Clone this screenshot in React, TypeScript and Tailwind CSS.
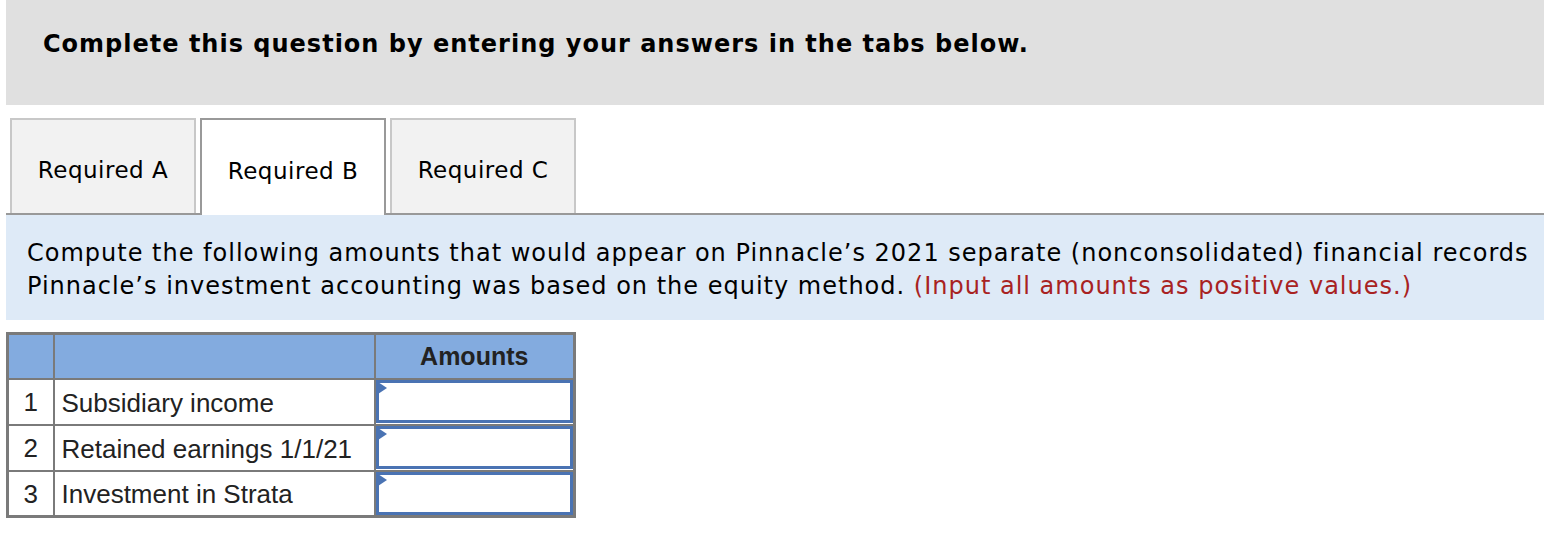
const rows = [
  { n: 1, label: "Subsidiary income" },
  { n: 2, label: "Retained earnings 1/1/21" },
  { n: 3, label: "Investment in Strata" },
];

const tabs = ["Required A", "Required B", "Required C"];

export default function App() {
  return (
    <div className="w-[1544px] h-[536px] bg-white overflow-hidden">
      <div className="ml-[6px] h-[105px] bg-[#e0e0e0] pl-[37px] pt-[26px]">
        <h1 className="font-['DejaVu_Sans',sans-serif] font-bold text-[24px] tracking-[1px] text-black whitespace-nowrap">
          Complete this question by entering your answers in the tabs below.
        </h1>
      </div>

      <div className="mt-[15px] ml-[6px] flex items-end gap-[4px] pl-[4px] border-b-2 border-[#999999] h-[95px]">
        {tabs.map((t) => {
          const active = t === "Required B";
          return (
            <div
              key={t}
              className={`w-[186px] h-[95px] pt-[7px] flex items-center justify-center font-['DejaVu_Sans',sans-serif] text-[23px] tracking-[0.5px] text-black border-2 border-b-0 ${
                active
                  ? "-mb-[2px] h-[97px] bg-white border-[#999999]"
                  : "bg-[#f2f2f2] border-[#c8c8c8]"
              }`}
            >
              {t}
            </div>
          );
        })}
      </div>

      <div className="ml-[6px] h-[105px] bg-[#deeaf7] pl-[21px] pt-[22px] font-['DejaVu_Sans',sans-serif] text-[24px] tracking-[1px] leading-[33px] text-black whitespace-nowrap">
        <p>Compute the following amounts that would appear on Pinnacle’s 2021 separate (nonconsolidated) financial records</p>
        <p>
          Pinnacle’s investment accounting was based on the equity method.{" "}
          <span className="text-[#a82222]">(Input all amounts as positive values.)</span>
        </p>
      </div>

      <table className="mt-[12px] ml-[6px] border-collapse border-[3px] border-[#7a7a7a] font-['Liberation_Sans',Arial,sans-serif] text-[26px] text-[#222]">
        <thead>
          <tr className="h-[45px] bg-[#83abdf]">
            <th className="w-[46px] border-2 border-[#7a7a7a]"></th>
            <th className="w-[321px] border-2 border-[#7a7a7a]"></th>
            <th className="w-[200px] border-2 border-[#7a7a7a] font-bold text-[25px] text-center">Amounts</th>
          </tr>
        </thead>
        <tbody>
          {rows.map((r) => (
            <tr key={r.n} className="h-[46px]">
              <td className="border-2 border-[#7a7a7a] text-center pt-[2px]">{r.n}</td>
              <td className="border-2 border-[#7a7a7a] pl-[7px] pt-[3px] whitespace-nowrap">{r.label}</td>
              <td className="border-2 border-[#7a7a7a] p-0">
                <div className="relative h-[43px] border-[3px] border-[#4a73b3] bg-white">
                  <svg className="absolute -left-[1px] -top-[1px]" width="9" height="12" viewBox="0 0 9 12">
                    <polygon points="0,0 9,6 0,12" fill="#4a73b3" />
                  </svg>
                </div>
              </td>
            </tr>
          ))}
        </tbody>
      </table>
    </div>
  );
}
